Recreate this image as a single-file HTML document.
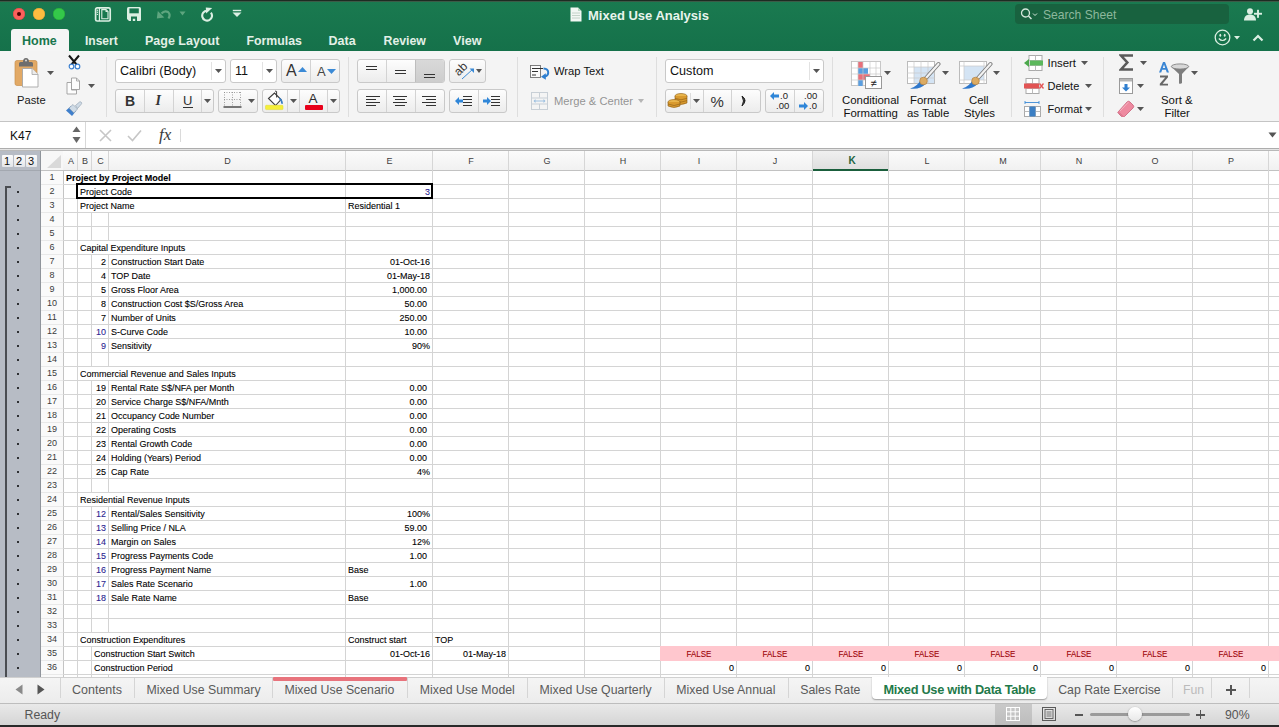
<!DOCTYPE html><html><head><meta charset="utf-8"><style>
html,body{margin:0;padding:0}
body{width:1279px;height:727px;overflow:hidden;position:relative;background:#fff;font-family:"Liberation Sans",sans-serif}
div{position:absolute;box-sizing:border-box}
.t{white-space:nowrap;line-height:1}
.c{white-space:nowrap;line-height:14px;height:14px;font-size:9.5px;color:#000;-webkit-text-stroke:0.1px}
.btn{border:1px solid #c9c9c9;border-radius:3px;background:linear-gradient(#fdfdfd,#ececec)}
.sep{background:#dcdcdc;width:1px}
</style></head><body>

<div style="left:0px;top:0px;width:1279px;height:51px;background:linear-gradient(#1a7a50,#15714a)"></div>
<div style="left:0px;top:0px;width:1279px;height:1px;background:#1d2b22"></div>
<div style="left:0px;top:1px;width:1279px;height:1px;background:#3b5a47"></div>
<div style="left:13px;top:8px;width:12px;height:12px;border-radius:50%;background:#fc605c;box-shadow:inset 0 0 0 0.5px #de4a46"></div>
<div style="left:33px;top:8px;width:12px;height:12px;border-radius:50%;background:#fdbc40;box-shadow:inset 0 0 0 0.5px #de9f34"></div>
<div style="left:53px;top:8px;width:12px;height:12px;border-radius:50%;background:#34c84a;box-shadow:inset 0 0 0 0.5px #27aa35"></div>
<div style="left:17px;top:12px;width:4px;height:4px;border-radius:50%;background:#4d0000"></div>
<svg style="position:absolute;left:94px;top:6px;" width="18" height="16" viewBox="0 0 18 16"><rect x="1.6" y="1.8" width="14.6" height="13.2" rx="1.6" fill="none" stroke="#dcefe3" stroke-width="1.7"/><rect x="4.8" y="2" width="1.2" height="13" fill="#dcefe3"/><circle cx="3.4" cy="4.2" r="0.7" fill="#dcefe3"/><circle cx="3.4" cy="6.3" r="0.7" fill="#dcefe3"/><circle cx="3.4" cy="8.4" r="0.7" fill="#dcefe3"/><path d="M7.8 3.6h4.2l2 2v7.2H7.8z" fill="none" stroke="#dcefe3" stroke-width="1.1"/><path d="M11.5 3.6l2.5 2.5h-2.5z" fill="#dcefe3"/></svg>
<svg style="position:absolute;left:126px;top:6px;" width="16" height="16" viewBox="0 0 16 16"><path d="M2.5 1h11q1.5 0 1.5 1.5v11q0 1.5-1.5 1.5H3L1 13V2.5Q1 1 2.5 1z" fill="#dcefe3"/><rect x="3.4" y="2.4" width="9.4" height="4.9" fill="#1a7650"/><path d="M5 14.9v-4.3h6v4.3h-1.8v-2.2h-2.4v2.2z" fill="#1a7650"/></svg>
<svg style="position:absolute;left:156px;top:8px;" width="17" height="13" viewBox="0 0 17 13"><path d="M5.5 5.5q3-3.5 6.5-1.5q3 2.5 0.5 6.5" fill="none" stroke="#5ea57f" stroke-width="2.2"/><path d="M0.8 10.5l1-7.5 6.5 6.5z" fill="#5ea57f"/></svg>
<svg style="position:absolute;left:179px;top:11px;" width="7" height="5" viewBox="0 0 7 5"><path d="M0.5 0.5h6l-3 4z" fill="#5ea57f"/></svg>
<svg style="position:absolute;left:199px;top:7px;" width="15" height="15" viewBox="0 0 15 15"><path d="M8 3.8A4.9 4.9 0 1 0 11.9 5.6" fill="none" stroke="#dcefe3" stroke-width="2.1"/><path d="M6.8 0.6L13.2 0.9 7.2 6.6z" fill="#dcefe3"/></svg>
<svg style="position:absolute;left:232px;top:9px;" width="10" height="9" viewBox="0 0 10 9"><rect x="0.8" y="0.8" width="8.4" height="1.4" fill="#dcefe3"/><path d="M0.5 3.4h9l-4.5 4.6z" fill="#dcefe3"/></svg>
<svg style="position:absolute;left:570px;top:7px;" width="12" height="15" viewBox="0 0 12 15"><path d="M0.5 0.5h7.5l3.5 3.5v10.5h-11z" fill="#f2f7f3"/><path d="M8 0.5v3.5h3.5" fill="#b9d7c3"/><g stroke="#b8c9bd" stroke-width="0.8"><line x1="2" y1="6" x2="10" y2="6"/><line x1="2" y1="8.5" x2="10" y2="8.5"/><line x1="2" y1="11" x2="10" y2="11"/></g></svg>
<div class="t" style="left:588px;top:9px;font-size:13px;color:#e8f4ec;font-weight:bold">Mixed Use Analysis</div>
<div style="left:1015px;top:4px;width:214px;height:20px;background:#18623f;border-radius:4px"></div>
<svg style="position:absolute;left:1020px;top:8px;" width="18" height="12" viewBox="0 0 18 12"><circle cx="5.5" cy="5" r="4" fill="none" stroke="#d5e8dc" stroke-width="1.3"/><line x1="8.5" y1="8" x2="11.5" y2="11" stroke="#d5e8dc" stroke-width="1.5"/><path d="M13 5.5l2 2 2-2" fill="none" stroke="#d5e8dc" stroke-width="1"/></svg>
<div class="t" style="left:1043px;top:9px;font-size:12.1px;color:#8cb89d">Search Sheet</div>
<svg style="position:absolute;left:1244px;top:8px;" width="19" height="13" viewBox="0 0 19 13"><circle cx="6" cy="3.2" r="3" fill="#dcefe3"/><path d="M0 12.5c0-4 2.5-6 6-6s6 2 6 6z" fill="#dcefe3"/><rect x="10" y="4.8" width="8" height="1.9" fill="#dcefe3"/><rect x="13.05" y="1.8" width="1.9" height="8" fill="#dcefe3"/></svg>
<div style="left:11px;top:29px;width:58px;height:23px;background:#f5f5f5;border-radius:3px 3px 0 0"></div>
<div class="t" style="left:22px;top:35px;font-size:12.5px;font-weight:bold;color:#18764d">Home</div>
<div class="t" style="left:85px;top:35px;font-size:12px;font-weight:bold;color:#e3f0e7">Insert</div>
<div class="t" style="left:145px;top:35px;font-size:12.5px;font-weight:bold;color:#e3f0e7">Page Layout</div>
<div class="t" style="left:246.5px;top:35px;font-size:12.3px;font-weight:bold;color:#e3f0e7">Formulas</div>
<div class="t" style="left:328.5px;top:35px;font-size:12.5px;font-weight:bold;color:#e3f0e7">Data</div>
<div class="t" style="left:383.5px;top:35px;font-size:12.3px;font-weight:bold;color:#e3f0e7">Review</div>
<div class="t" style="left:453px;top:35px;font-size:12.6px;font-weight:bold;color:#e3f0e7">View</div>
<svg style="position:absolute;left:1214px;top:29px;" width="26" height="17" viewBox="0 0 26 17"><circle cx="8.5" cy="8.5" r="7.3" fill="none" stroke="#dcefe3" stroke-width="1.3"/><ellipse cx="6.3" cy="6.3" rx="0.9" ry="1.5" fill="#dcefe3"/><ellipse cx="10.7" cy="6.3" rx="0.9" ry="1.5" fill="#dcefe3"/><path d="M4.8 9.5q3.7 4 7.4 0" fill="none" stroke="#dcefe3" stroke-width="1.2"/><path d="M20 7h6l-3 3.5z" fill="#dcefe3"/></svg>
<svg style="position:absolute;left:1252px;top:33px;" width="12" height="9" viewBox="0 0 12 9"><path d="M1.5 7.5l4.5-4.5 4.5 4.5" fill="none" stroke="#dcefe3" stroke-width="2.2"/></svg>
<div style="left:0px;top:51px;width:1279px;height:70px;background:#f4f4f4"></div>
<div style="left:0px;top:121px;width:1279px;height:1px;background:#c4c4c4"></div>
<div style="left:106px;top:57px;width:1px;height:60px;background:#dedede"></div>
<div style="left:348px;top:57px;width:1px;height:60px;background:#dedede"></div>
<div style="left:517px;top:57px;width:1px;height:60px;background:#dedede"></div>
<div style="left:656px;top:57px;width:1px;height:60px;background:#dedede"></div>
<div style="left:832px;top:57px;width:1px;height:60px;background:#dedede"></div>
<div style="left:1011px;top:57px;width:1px;height:60px;background:#dedede"></div>
<div style="left:1103px;top:57px;width:1px;height:60px;background:#dedede"></div>
<svg style="position:absolute;left:14px;top:57px;" width="26" height="32" viewBox="0 0 26 32"><rect x="1" y="3.5" width="22" height="25" rx="2" fill="#e2a965" stroke="#c98f4c" stroke-width="0.7"/><path d="M5 9.5v-3q0-1.5 1.5-1.5h2.5q0-4 3-4t3 4h2.5q1.5 0 1.5 1.5v3z" fill="#6e6e6e"/><circle cx="12" cy="3.6" r="1" fill="#ddd"/><path d="M8.5 11.5h9.5l6 6v12.5h-15.5z" fill="#fff" stroke="#a6a6a6" stroke-width="0.9"/><path d="M18 11.5v6h6" fill="#ececec" stroke="#a6a6a6" stroke-width="0.8"/></svg>
<svg style="position:absolute;left:47.0px;top:71.0px;" width="7" height="4" viewBox="0 0 7 4"><path d="M0 0h7l-3.5 4z" fill="#555"/></svg>
<div class="t" style="left:17px;top:95px;font-size:11.2px;color:#1a1a1a">Paste</div>
<svg style="position:absolute;left:66px;top:54px;" width="16" height="16" viewBox="0 0 16 16"><path d="M3 1.5l7.5 9M13 1.5L5.5 10.5" stroke="#151515" stroke-width="2"/><circle cx="5.5" cy="12.5" r="2.3" fill="#fff" stroke="#3a7fd0" stroke-width="1.2"/><circle cx="11.5" cy="12.5" r="2.3" fill="#fff" stroke="#3a7fd0" stroke-width="1.2"/></svg>
<svg style="position:absolute;left:66px;top:77px;" width="16" height="18" viewBox="0 0 16 18"><path d="M5.5 1h5l3 3v8.5h-8z" fill="#fdfdfd" stroke="#9d9d9d" stroke-width="0.9"/><path d="M10.5 1v3h3" fill="none" stroke="#9d9d9d" stroke-width="0.8"/><path d="M1 5.5h4.5v7.5h5v4h-9.5z" fill="#fdfdfd" stroke="#9d9d9d" stroke-width="0.9"/></svg>
<svg style="position:absolute;left:88.0px;top:83.5px;" width="7" height="4" viewBox="0 0 7 4"><path d="M0 0h7l-3.5 4z" fill="#555"/></svg>
<svg style="position:absolute;left:65px;top:101px;" width="18" height="16" viewBox="0 0 18 16"><path d="M1 9.5l5-4.5 5 5-4 5z" fill="#3f7fcb"/><path d="M4 7l4-3.5 4.5 4.5-3.5 4z" fill="#cfdbe6" stroke="#8a9aab" stroke-width="0.6"/><path d="M10.5 4.5l4-3.5q1.5-.5 2 .5.5 1-.5 2l-3.5 4z" fill="#cfdbe6" stroke="#8a9aab" stroke-width="0.6"/></svg>
<div style="left:115px;top:59px;width:111px;height:24px;border:1px solid #c9c9c9;border-radius:3px;background:#fff"></div>
<div style="left:211px;top:62px;width:1px;height:18px;background:#e2e2e2"></div>
<div class="t" style="left:120px;top:65px;font-size:12.6px;color:#111">Calibri (Body)</div>
<svg style="position:absolute;left:215.0px;top:69.0px;" width="7" height="4" viewBox="0 0 7 4"><path d="M0 0h7l-3.5 4z" fill="#555"/></svg>
<div style="left:230px;top:59px;width:47px;height:24px;border:1px solid #c9c9c9;border-radius:3px;background:#fff"></div>
<div style="left:262px;top:62px;width:1px;height:18px;background:#e2e2e2"></div>
<div class="t" style="left:235px;top:65px;font-size:12.6px;color:#111">11</div>
<svg style="position:absolute;left:266.0px;top:69.0px;" width="7" height="4" viewBox="0 0 7 4"><path d="M0 0h7l-3.5 4z" fill="#555"/></svg>
<div style="left:281px;top:59px;width:59px;height:24px;"></div>
<div class="btn" style="left:281px;top:59px;width:59px;height:24px"></div>
<div style="left:310px;top:60px;width:1px;height:22px;background:#d3d3d3"></div>
<div class="t" style="left:286px;top:63px;font-size:16px;color:#333">A</div>
<svg style="position:absolute;left:298px;top:67px;" width="9" height="5" viewBox="0 0 9 5"><path d="M0 5l4.5-5 4.5 5z" fill="#3b8ad6"/></svg>
<div class="t" style="left:317px;top:65px;font-size:13px;color:#444">A</div>
<svg style="position:absolute;left:327px;top:69px;" width="9" height="5" viewBox="0 0 9 5"><path d="M0 0h9l-4.5 5z" fill="#3b8ad6"/></svg>
<div class="btn" style="left:115px;top:89px;width:99px;height:24px"></div>
<div style="left:144px;top:90px;width:1px;height:22px;background:#d3d3d3"></div>
<div style="left:173px;top:90px;width:1px;height:22px;background:#d3d3d3"></div>
<div style="left:201px;top:90px;width:1px;height:22px;background:#d3d3d3"></div>
<div class="t" style="left:125px;top:94px;font-size:14px;font-weight:bold;color:#333">B</div>
<div class="t" style="left:155.5px;top:94px;font-size:14px;font-style:italic;font-family:'Liberation Serif';font-weight:bold;color:#333">I</div>
<div class="t" style="left:183px;top:94px;font-size:13px;color:#333">U</div>
<div style="left:183px;top:106.5px;width:10px;height:1.3px;background:#333"></div>
<svg style="position:absolute;left:203.5px;top:99.0px;" width="7" height="4" viewBox="0 0 7 4"><path d="M0 0h7l-3.5 4z" fill="#555"/></svg>
<div class="btn" style="left:218px;top:89px;width:40px;height:24px"></div>
<svg style="position:absolute;left:223px;top:91px;" width="19" height="17" viewBox="0 0 19 17"><g stroke="#8a8a8a" stroke-width="0.9" stroke-dasharray="0.9 1.6"><path d="M1 1.5h17M1 8.5h17M1.5 1v15M9.5 1v15M17.5 1v15"/></g><path d="M0.5 16h18" stroke="#333" stroke-width="1.3"/></svg>
<svg style="position:absolute;left:248.0px;top:99.0px;" width="7" height="4" viewBox="0 0 7 4"><path d="M0 0h7l-3.5 4z" fill="#555"/></svg>
<div class="btn" style="left:262px;top:89px;width:78px;height:24px"></div>
<div style="left:287px;top:90px;width:1px;height:22px;background:#d3d3d3"></div>
<div style="left:299px;top:90px;width:1px;height:22px;background:#d3d3d3"></div>
<div style="left:327px;top:90px;width:1px;height:22px;background:#d3d3d3"></div>
<svg style="position:absolute;left:264px;top:90px;" width="22" height="21" viewBox="0 0 22 21"><path d="M4.5 8.5l6-5.5 6.5 6.5-5.5 6z" fill="#fff" stroke="#3c3c3c" stroke-width="1.1"/><path d="M11 1.5q1-1 1.6 0v6" fill="none" stroke="#3c3c3c" stroke-width="1"/><path d="M15.5 7.5q3 1.5 3.5 6 -1 .8-1.8 0q0-3-2.2-4.5z" fill="#3a7fc4"/><rect x="1.5" y="15.3" width="17.5" height="4.3" rx="0.8" fill="#f5ef3a" stroke="#e0d82a" stroke-width="0.5"/></svg>
<svg style="position:absolute;left:290.0px;top:99.0px;" width="7" height="4" viewBox="0 0 7 4"><path d="M0 0h7l-3.5 4z" fill="#555"/></svg>
<div class="t" style="left:308.5px;top:91.5px;font-size:13.5px;color:#2d2d2d">A</div>
<div style="left:305px;top:105px;width:18px;height:4.5px;background:#e8001a;border-radius:1px"></div>
<svg style="position:absolute;left:329.5px;top:99.0px;" width="7" height="4" viewBox="0 0 7 4"><path d="M0 0h7l-3.5 4z" fill="#555"/></svg>
<div class="btn" style="left:357px;top:59px;width:88px;height:24px"></div>
<div style="left:415px;top:60px;width:29px;height:22px;background:linear-gradient(#d9d9d9,#cdcdcd);border-radius:0 2px 2px 0"></div>
<div style="left:386px;top:60px;width:1px;height:22px;background:#d3d3d3"></div>
<div style="left:415px;top:60px;width:1px;height:22px;background:#bdbdbd"></div>
<div style="left:366px;top:66px;width:11px;height:1.3px;background:#333"></div>
<div style="left:366px;top:69px;width:11px;height:1.3px;background:#333"></div>
<div style="left:395px;top:70px;width:11px;height:1.3px;background:#333"></div>
<div style="left:395px;top:73px;width:11px;height:1.3px;background:#333"></div>
<div style="left:424px;top:74px;width:11px;height:1.3px;background:#333"></div>
<div style="left:424px;top:77px;width:11px;height:1.3px;background:#333"></div>
<div class="btn" style="left:449px;top:59px;width:37px;height:24px"></div>
<div class="t" style="left:454px;top:63px;font-size:12px;color:#333;transform:rotate(-45deg);transform-origin:50% 50%">ab</div>
<svg style="position:absolute;left:461px;top:67px;" width="14" height="13" viewBox="0 0 14 13"><path d="M1 12L12 2" stroke="#3b8ad6" stroke-width="1"/><path d="M8.5 1.5h4.5v4.5z" fill="#3b8ad6"/></svg>
<svg style="position:absolute;left:476.0px;top:69.0px;" width="6" height="4" viewBox="0 0 6 4"><path d="M0 0h6l-3.0 4z" fill="#555"/></svg>
<div class="btn" style="left:357px;top:89px;width:88px;height:24px"></div>
<div style="left:386px;top:90px;width:1px;height:22px;background:#d3d3d3"></div>
<div style="left:415px;top:90px;width:1px;height:22px;background:#d3d3d3"></div>
<div style="left:366px;top:96px;width:14px;height:1.2px;background:#333"></div>
<div style="left:366px;top:99px;width:10px;height:1.2px;background:#333"></div>
<div style="left:366px;top:102px;width:14px;height:1.2px;background:#333"></div>
<div style="left:366px;top:105px;width:10px;height:1.2px;background:#333"></div>
<div style="left:393.0px;top:96px;width:14px;height:1.2px;background:#333"></div>
<div style="left:395.0px;top:99px;width:10px;height:1.2px;background:#333"></div>
<div style="left:393.0px;top:102px;width:14px;height:1.2px;background:#333"></div>
<div style="left:395.0px;top:105px;width:10px;height:1.2px;background:#333"></div>
<div style="left:422px;top:96px;width:14px;height:1.2px;background:#333"></div>
<div style="left:426px;top:99px;width:10px;height:1.2px;background:#333"></div>
<div style="left:422px;top:102px;width:14px;height:1.2px;background:#333"></div>
<div style="left:426px;top:105px;width:10px;height:1.2px;background:#333"></div>
<div class="btn" style="left:449px;top:89px;width:58px;height:24px"></div>
<div style="left:478px;top:90px;width:1px;height:22px;background:#d3d3d3"></div>
<div style="left:463px;top:96px;width:9px;height:1.2px;background:#333"></div>
<div style="left:463px;top:99px;width:9px;height:1.2px;background:#333"></div>
<div style="left:463px;top:102px;width:9px;height:1.2px;background:#333"></div>
<div style="left:463px;top:105px;width:9px;height:1.2px;background:#333"></div>
<svg style="position:absolute;left:455px;top:96px;" width="8" height="10" viewBox="0 0 8 10"><path d="M0 5l4-4v2.5h4v3H4V9z" fill="#2f86d8"/></svg>
<div style="left:491px;top:96px;width:9px;height:1.2px;background:#333"></div>
<div style="left:491px;top:99px;width:9px;height:1.2px;background:#333"></div>
<div style="left:491px;top:102px;width:9px;height:1.2px;background:#333"></div>
<div style="left:491px;top:105px;width:9px;height:1.2px;background:#333"></div>
<svg style="position:absolute;left:483px;top:96px;" width="8" height="10" viewBox="0 0 8 10"><path d="M8 5L4 1v2.5H0v3h4V9z" fill="#2f86d8"/></svg>
<svg style="position:absolute;left:529px;top:64px;" width="23" height="16" viewBox="0 0 23 16"><rect x="1.5" y="1.5" width="10" height="12" fill="#fbfbfb" stroke="#707070" stroke-width="0.9"/><path d="M3 4.5H14M3 7.5H9M3 11H7" stroke="#333" stroke-width="1.1"/><path d="M14.5 4.5Q19.5 4.8 19.2 9Q19 12 15.5 12.6" fill="none" stroke="#2f7fcf" stroke-width="2"/><path d="M16.8 9.2L12 12.8 16.8 15.8z" fill="#2f7fcf"/></svg>
<div class="t" style="left:554px;top:66px;font-size:11.2px;color:#111">Wrap Text</div>
<svg style="position:absolute;left:531px;top:92px;" width="17" height="18" viewBox="0 0 17 18"><rect x="0.5" y="0.5" width="16" height="17" fill="none" stroke="#c8cfd6"/><path d="M0.5 6h16M0.5 12h16M8.5 0.5v5M8.5 12v5" stroke="#c8cfd6"/><path d="M3 9h11" stroke="#9ec0e0" stroke-width="1"/><path d="M2.5 9l2-2v4zM14.5 9l-2-2v4z" fill="#9ec0e0"/></svg>
<div class="t" style="left:554px;top:96px;font-size:11.2px;color:#959595">Merge &amp; Center</div>
<svg style="position:absolute;left:638.0px;top:99.0px;" width="6" height="4" viewBox="0 0 6 4"><path d="M0 0h6l-3.0 4z" fill="#b5b5b5"/></svg>
<div style="left:665px;top:59px;width:159px;height:24px;border:1px solid #c9c9c9;border-radius:3px;background:#fff"></div>
<div style="left:809px;top:62px;width:1px;height:18px;background:#e2e2e2"></div>
<div class="t" style="left:670px;top:65px;font-size:12.6px;color:#111">Custom</div>
<svg style="position:absolute;left:813.0px;top:69.0px;" width="7" height="4" viewBox="0 0 7 4"><path d="M0 0h7l-3.5 4z" fill="#555"/></svg>
<div class="btn" style="left:665px;top:89px;width:96px;height:24px"></div>
<div style="left:690px;top:93px;width:1px;height:16px;background:#dcdcdc"></div>
<div style="left:703px;top:90px;width:1px;height:22px;background:#d3d3d3"></div>
<div style="left:731px;top:90px;width:1px;height:22px;background:#d3d3d3"></div>
<svg style="position:absolute;left:666px;top:92px;" width="24" height="17" viewBox="0 0 24 17"><g stroke="#8a5a14" stroke-width="0.6"><ellipse cx="15" cy="4" rx="6" ry="2.5" fill="#e9b54c"/><path d="M9 4v7q6 3 12 0V4" fill="#d99a2e"/><path d="M9 6.3q6 3 12 0M9 8.6q6 3 12 0" fill="none"/><ellipse cx="8" cy="10" rx="6" ry="2.5" fill="#e9b54c"/><path d="M2 10v4q6 3 12 0v-4" fill="#d99a2e"/><path d="M2 12q6 3 12 0" fill="none"/></g></svg>
<svg style="position:absolute;left:693.0px;top:99.0px;" width="7" height="4" viewBox="0 0 7 4"><path d="M0 0h7l-3.5 4z" fill="#555"/></svg>
<div class="t" style="left:710.5px;top:93.5px;font-size:15px;color:#333">%</div>
<svg style="position:absolute;left:740px;top:95px;" width="8" height="12" viewBox="0 0 8 12"><path d="M2 1q6 4 0 10q3-5 0-10z" fill="#222" stroke="#222" stroke-width="1"/></svg>
<div class="btn" style="left:765px;top:89px;width:59px;height:24px"></div>
<div style="left:794px;top:90px;width:1px;height:22px;background:#d3d3d3"></div>
<svg style="position:absolute;left:770px;top:92px;" width="9" height="8" viewBox="0 0 9 8"><path d="M0 4l4-4v2.5h5v3H4V8z" fill="#2f86d8"/></svg>
<div class="t" style="left:780px;top:91px;font-size:9.5px;color:#222">.0</div>
<div class="t" style="left:776px;top:101px;font-size:9.5px;color:#222">.00</div>
<div class="t" style="left:804px;top:91px;font-size:9.5px;color:#222">.00</div>
<svg style="position:absolute;left:799px;top:102px;" width="9" height="8" viewBox="0 0 9 8"><path d="M9 4L5 0v2.5H0v3h5V8z" fill="#2f86d8"/></svg>
<div class="t" style="left:809px;top:101px;font-size:9.5px;color:#222">.0</div>
<svg style="position:absolute;left:851px;top:61px;" width="32" height="28" viewBox="0 0 32 28"><g fill="#fff" stroke="#bbb" stroke-width="0.8"><rect x="0.5" y="0.5" width="29" height="24"/></g><rect x="7" y="1" width="5" height="6" fill="#e8707a"/><rect x="7" y="7" width="10" height="6" fill="#5a9ee0"/><rect x="7" y="13" width="12" height="6" fill="#e8707a"/><rect x="7" y="19" width="5" height="6" fill="#5a9ee0"/><g stroke="#c8c8c8" stroke-width="0.7"><path d="M7 0v25M12 0v25M19 0v25M25 0v25M0 7h30M0 13h30M0 19h30"/></g><rect x="14.5" y="15.5" width="16" height="12" fill="#fff" stroke="#999"/><text x="22.5" y="26" font-size="11" text-anchor="middle" fill="#222" font-family="Liberation Sans">&#8800;</text></svg>
<svg style="position:absolute;left:884.0px;top:71.0px;" width="7" height="4" viewBox="0 0 7 4"><path d="M0 0h7l-3.5 4z" fill="#555"/></svg>
<div class="t" style="left:842px;top:95px;font-size:11.4px;color:#111">Conditional</div>
<div class="t" style="left:843.5px;top:107.5px;font-size:11.4px;color:#111">Formatting</div>
<svg style="position:absolute;left:907px;top:61px;" width="34" height="28" viewBox="0 0 34 28"><rect x="0.5" y="0.5" width="27" height="22" fill="#fff" stroke="#bbb"/><rect x="7" y="6" width="20" height="16" fill="#d4e4f4"/><g stroke="#c8c8c8" stroke-width="0.7"><path d="M7 0v23M14 0v23M21 0v23M0 6h28M0 12h28M0 17h28"/></g><path d="M31.5 3L19 17" stroke="#7d7d7d" stroke-width="4" stroke-linecap="round"/><path d="M31.5 3L19 17" stroke="#f2f2f2" stroke-width="2.2" stroke-linecap="round"/><path d="M13.5 19q-3 6.5-10.5 8.5q10 1.5 16-5z" fill="#2f78cc"/><circle cx="16.5" cy="20" r="3.8" fill="#dcab62" stroke="#b58140" stroke-width="0.7"/></svg>
<svg style="position:absolute;left:941.5px;top:71.0px;" width="7" height="4" viewBox="0 0 7 4"><path d="M0 0h7l-3.5 4z" fill="#555"/></svg>
<div class="t" style="left:910px;top:95px;font-size:11.4px;color:#111">Format</div>
<div class="t" style="left:907px;top:107.5px;font-size:11.4px;color:#111">as Table</div>
<svg style="position:absolute;left:959px;top:61px;" width="34" height="28" viewBox="0 0 34 28"><rect x="0.5" y="0.5" width="27" height="22" fill="#fff" stroke="#bbb"/><rect x="5" y="5" width="20" height="14" fill="#d4e4f4"/><g stroke="#c8c8c8" stroke-width="0.7"><path d="M5 0v23M25 0v23M0 5h28M0 19h28"/></g><path d="M31.5 3L19 17" stroke="#7d7d7d" stroke-width="4" stroke-linecap="round"/><path d="M31.5 3L19 17" stroke="#f2f2f2" stroke-width="2.2" stroke-linecap="round"/><path d="M13.5 19q-3 6.5-10.5 8.5q10 1.5 16-5z" fill="#2f78cc"/><circle cx="16.5" cy="20" r="3.8" fill="#dcab62" stroke="#b58140" stroke-width="0.7"/></svg>
<svg style="position:absolute;left:992.5px;top:71.0px;" width="7" height="4" viewBox="0 0 7 4"><path d="M0 0h7l-3.5 4z" fill="#555"/></svg>
<div class="t" style="left:969px;top:95px;font-size:11.4px;color:#111">Cell</div>
<div class="t" style="left:964px;top:107.5px;font-size:11.4px;color:#111">Styles</div>
<svg style="position:absolute;left:1024px;top:55px;" width="20" height="16" viewBox="0 0 20 16"><rect x="5" y="0.5" width="13" height="15" fill="#fff" stroke="#aaa"/><path d="M5 5.5h13M5 10.5h13M11.5 0.5v15" stroke="#bbb"/><rect x="6" y="5.5" width="13" height="5" fill="#5cb85c"/><path d="M0 8l5-4v8z" fill="#4ca84c"/></svg>
<div class="t" style="left:1047.5px;top:57.5px;font-size:11.4px;color:#111">Insert</div>
<svg style="position:absolute;left:1080.5px;top:61.0px;" width="7" height="4" viewBox="0 0 7 4"><path d="M0 0h7l-3.5 4z" fill="#555"/></svg>
<svg style="position:absolute;left:1024px;top:78px;" width="20" height="16" viewBox="0 0 20 16"><rect x="2" y="0.5" width="13" height="15" fill="#fff" stroke="#aaa"/><path d="M2 5.5h13M2 10.5h13M8.5 0.5v15" stroke="#bbb"/><rect x="0" y="5.5" width="15" height="5" fill="#e25454"/><path d="M15.5 5.5l4 5M19.5 5.5l-4 5" stroke="#e25454" stroke-width="1.3"/></svg>
<div class="t" style="left:1047.5px;top:80.5px;font-size:11px;color:#111">Delete</div>
<svg style="position:absolute;left:1084.5px;top:84.0px;" width="7" height="4" viewBox="0 0 7 4"><path d="M0 0h7l-3.5 4z" fill="#555"/></svg>
<svg style="position:absolute;left:1024px;top:100px;" width="18" height="17" viewBox="0 0 18 17"><path d="M1 2.5h14M1 1v3M15 1v3" stroke="#3b8ad6" stroke-width="0.9"/><rect x="0.5" y="6.5" width="16" height="10" fill="#fff" stroke="#aaa"/><path d="M0.5 11.5h16M5.5 6.5v10M11.5 6.5v10" stroke="#bbb"/><rect x="5.5" y="6.5" width="6" height="10" fill="#3b7fc4"/></svg>
<div class="t" style="left:1047.5px;top:103.5px;font-size:11px;color:#111">Format</div>
<svg style="position:absolute;left:1084.5px;top:107.0px;" width="7" height="4" viewBox="0 0 7 4"><path d="M0 0h7l-3.5 4z" fill="#555"/></svg>
<svg style="position:absolute;left:1119px;top:54px;" width="15" height="17" viewBox="0 0 15 17"><path d="M14 1.5H2L8.3 8.5 2 15.5H14" fill="none" stroke="#5b5b5b" stroke-width="2.6" stroke-linejoin="miter" stroke-miterlimit="3"/></svg>
<svg style="position:absolute;left:1140.1px;top:60.5px;" width="7" height="4" viewBox="0 0 7 4"><path d="M0 0h7l-3.5 4z" fill="#555"/></svg>
<svg style="position:absolute;left:1119px;top:78px;" width="14" height="16" viewBox="0 0 14 16"><rect x="0.5" y="0.5" width="13" height="15" fill="#fff" stroke="#9a9a9a"/><rect x="1" y="1" width="12" height="2.5" fill="#b5b5b5"/><path d="M5.5 6h3v3.5h2.5l-4 4-4-4h2.5z" fill="#2f7fd0"/></svg>
<svg style="position:absolute;left:1136.5px;top:84.0px;" width="7" height="4" viewBox="0 0 7 4"><path d="M0 0h7l-3.5 4z" fill="#555"/></svg>
<svg style="position:absolute;left:1117px;top:100px;" width="18" height="17" viewBox="0 0 18 17"><path d="M1.5 11.5l8.5-9.5q1.5-1.5 3 0l3 3q1.5 1.5 0 3l-8.5 8.5q-1.5 1.5-3 0l-3-3q-1.5-1.5 0-2z" fill="#ee8aa0" stroke="#c9607a" stroke-width="0.8"/><path d="M2 12.5l3.5 3.5" stroke="#c9607a" stroke-width="0.8"/><path d="M3 11l8.5-9" stroke="#f8c0cc" stroke-width="0.8"/></svg>
<svg style="position:absolute;left:1136.5px;top:107.0px;" width="7" height="4" viewBox="0 0 7 4"><path d="M0 0h7l-3.5 4z" fill="#555"/></svg>
<svg style="position:absolute;left:1158px;top:61px;" width="32" height="26" viewBox="0 0 32 26"><path d="M1 11.5L5 1h2l4 10.5H8.8l-1-2.7H4.2l-1 2.7zM4.8 6.9h2.4L6 3.6z" fill="#3a86d4"/><path d="M2 14.5h8v1.8L4.6 22.7H10v1.9H1.8v-1.8l5.4-6.4H2z" fill="#666"/><path d="M13 5.5q9-4 18 0l-7 7.5v9q-1 1.2-3 0.5v-9.5z" fill="#7d7d7d"/><ellipse cx="22" cy="5.5" rx="8.7" ry="2.6" fill="#d8d8d8" stroke="#858585" stroke-width="0.9"/></svg>
<svg style="position:absolute;left:1191.0px;top:71.0px;" width="7" height="4" viewBox="0 0 7 4"><path d="M0 0h7l-3.5 4z" fill="#555"/></svg>
<div class="t" style="left:1161px;top:95px;font-size:11.4px;color:#111">Sort &amp;</div>
<div class="t" style="left:1164.5px;top:107.5px;font-size:11.4px;color:#111">Filter</div>
<div style="left:0px;top:122px;width:1279px;height:26px;background:#fff"></div>
<div style="left:85px;top:122px;width:1px;height:26px;background:#d8d8d8"></div>
<div class="t" style="left:10px;top:130px;font-size:12px;color:#111">K47</div>
<svg style="position:absolute;left:72px;top:126px;" width="9" height="18" viewBox="0 0 9 18"><path d="M0.5 6l4-5.5 4 5.5z" fill="#666"/><path d="M0.5 11h8l-4 6z" fill="#666"/></svg>
<svg style="position:absolute;left:99px;top:129px;" width="13" height="13" viewBox="0 0 13 13"><path d="M1 1l11 11M12 1L1 12" stroke="#c6c6c6" stroke-width="1.6"/></svg>
<svg style="position:absolute;left:127px;top:129px;" width="15" height="13" viewBox="0 0 15 13"><path d="M1 7l4.5 4.5L14 1.5" fill="none" stroke="#c6c6c6" stroke-width="1.6"/></svg>
<div class="t" style="left:159px;top:126px;font-size:17px;font-style:italic;font-family:'Liberation Serif';color:#3a3a3a">fx</div>
<div style="left:180px;top:129px;width:1px;height:13px;background:#dadada"></div>
<svg style="position:absolute;left:1268px;top:132px;" width="9" height="6" viewBox="0 0 9 6"><path d="M0.5 0.5h8l-4 5z" fill="#555"/></svg>
<div style="left:0px;top:148px;width:1279px;height:1px;background:#adadad"></div>
<div style="left:0px;top:149px;width:1279px;height:1px;background:#e4e4e4"></div>
<div style="left:0px;top:150px;width:1279px;height:1px;background:#b9b9b9"></div>
<div style="left:0px;top:151px;width:41px;height:526px;background:#b7bcc5"></div>
<div style="left:40px;top:151px;width:1px;height:526px;background:#8f949b"></div>
<div style="left:0px;top:170px;width:40px;height:1px;background:#a3a8b0"></div>
<div style="left:2px;top:155px;width:11px;height:12px;background:linear-gradient(#fafafa,#e4e6ea);border-radius:1px"></div>
<div class="t" style="left:4px;top:156px;font-size:11px;color:#111">1</div>
<div style="left:14px;top:155px;width:11px;height:12px;background:linear-gradient(#fafafa,#e4e6ea);border-radius:1px"></div>
<div class="t" style="left:16px;top:156px;font-size:11px;color:#111">2</div>
<div style="left:26px;top:155px;width:11px;height:12px;background:linear-gradient(#fafafa,#e4e6ea);border-radius:1px"></div>
<div class="t" style="left:28px;top:156px;font-size:11px;color:#111">3</div>
<div style="left:5px;top:186px;width:2px;height:491px;background:#4a4d52"></div>
<div style="left:5px;top:186px;width:6px;height:2px;background:#4a4d52"></div>
<div style="left:17px;top:191px;width:2px;height:2px;background:#2e3033"></div>
<div style="left:17px;top:205px;width:2px;height:2px;background:#2e3033"></div>
<div style="left:17px;top:219px;width:2px;height:2px;background:#2e3033"></div>
<div style="left:17px;top:233px;width:2px;height:2px;background:#2e3033"></div>
<div style="left:17px;top:247px;width:2px;height:2px;background:#2e3033"></div>
<div style="left:17px;top:261px;width:2px;height:2px;background:#2e3033"></div>
<div style="left:17px;top:275px;width:2px;height:2px;background:#2e3033"></div>
<div style="left:17px;top:289px;width:2px;height:2px;background:#2e3033"></div>
<div style="left:17px;top:303px;width:2px;height:2px;background:#2e3033"></div>
<div style="left:17px;top:317px;width:2px;height:2px;background:#2e3033"></div>
<div style="left:17px;top:331px;width:2px;height:2px;background:#2e3033"></div>
<div style="left:17px;top:345px;width:2px;height:2px;background:#2e3033"></div>
<div style="left:17px;top:359px;width:2px;height:2px;background:#2e3033"></div>
<div style="left:17px;top:373px;width:2px;height:2px;background:#2e3033"></div>
<div style="left:17px;top:387px;width:2px;height:2px;background:#2e3033"></div>
<div style="left:17px;top:401px;width:2px;height:2px;background:#2e3033"></div>
<div style="left:17px;top:415px;width:2px;height:2px;background:#2e3033"></div>
<div style="left:17px;top:429px;width:2px;height:2px;background:#2e3033"></div>
<div style="left:17px;top:443px;width:2px;height:2px;background:#2e3033"></div>
<div style="left:17px;top:457px;width:2px;height:2px;background:#2e3033"></div>
<div style="left:17px;top:471px;width:2px;height:2px;background:#2e3033"></div>
<div style="left:17px;top:485px;width:2px;height:2px;background:#2e3033"></div>
<div style="left:17px;top:499px;width:2px;height:2px;background:#2e3033"></div>
<div style="left:17px;top:513px;width:2px;height:2px;background:#2e3033"></div>
<div style="left:17px;top:527px;width:2px;height:2px;background:#2e3033"></div>
<div style="left:17px;top:541px;width:2px;height:2px;background:#2e3033"></div>
<div style="left:17px;top:555px;width:2px;height:2px;background:#2e3033"></div>
<div style="left:17px;top:569px;width:2px;height:2px;background:#2e3033"></div>
<div style="left:17px;top:583px;width:2px;height:2px;background:#2e3033"></div>
<div style="left:17px;top:597px;width:2px;height:2px;background:#2e3033"></div>
<div style="left:17px;top:611px;width:2px;height:2px;background:#2e3033"></div>
<div style="left:17px;top:625px;width:2px;height:2px;background:#2e3033"></div>
<div style="left:17px;top:639px;width:2px;height:2px;background:#2e3033"></div>
<div style="left:17px;top:653px;width:2px;height:2px;background:#2e3033"></div>
<div style="left:17px;top:667px;width:2px;height:2px;background:#2e3033"></div>
<div style="left:41px;top:151px;width:22px;height:526px;background:#fafafa"></div>
<div style="left:63px;top:151px;width:1px;height:526px;background:#c4c4c4"></div>
<div style="left:63px;top:151px;width:1216px;height:19px;background:linear-gradient(#fbfbfb,#f1f1f1)"></div>
<div style="left:41px;top:151px;width:22px;height:19px;background:#f7f7f7"></div>
<svg style="position:absolute;left:47px;top:155px;" width="14" height="13" viewBox="0 0 14 13"><path d="M14 0V13H0z" fill="#d9d9d9"/></svg>
<div style="left:41px;top:170px;width:1238px;height:1px;background:#c2c2c2"></div>
<div style="left:812px;top:151px;width:76px;height:19px;background:linear-gradient(#f0f0f0,#dedede)"></div>
<div style="left:812px;top:169px;width:77px;height:2px;background:#1a5e3c"></div>
<div style="left:77px;top:151px;width:1px;height:19px;background:#d6d6d6"></div>
<div class="t" style="left:64px;top:157px;width:14px;text-align:center;font-size:9px;color:#404040">A</div>
<div style="left:91px;top:151px;width:1px;height:19px;background:#d6d6d6"></div>
<div class="t" style="left:78px;top:157px;width:14px;text-align:center;font-size:9px;color:#404040">B</div>
<div style="left:108px;top:151px;width:1px;height:19px;background:#d6d6d6"></div>
<div class="t" style="left:92px;top:157px;width:17px;text-align:center;font-size:9px;color:#404040">C</div>
<div style="left:345px;top:151px;width:1px;height:19px;background:#d6d6d6"></div>
<div class="t" style="left:109px;top:157px;width:237px;text-align:center;font-size:9px;color:#404040">D</div>
<div style="left:432px;top:151px;width:1px;height:19px;background:#d6d6d6"></div>
<div class="t" style="left:346px;top:157px;width:87px;text-align:center;font-size:9px;color:#404040">E</div>
<div style="left:508px;top:151px;width:1px;height:19px;background:#d6d6d6"></div>
<div class="t" style="left:433px;top:157px;width:76px;text-align:center;font-size:9px;color:#404040">F</div>
<div style="left:584px;top:151px;width:1px;height:19px;background:#d6d6d6"></div>
<div class="t" style="left:509px;top:157px;width:76px;text-align:center;font-size:9px;color:#404040">G</div>
<div style="left:660px;top:151px;width:1px;height:19px;background:#d6d6d6"></div>
<div class="t" style="left:585px;top:157px;width:76px;text-align:center;font-size:9px;color:#404040">H</div>
<div style="left:736px;top:151px;width:1px;height:19px;background:#d6d6d6"></div>
<div class="t" style="left:661px;top:157px;width:76px;text-align:center;font-size:9px;color:#404040">I</div>
<div style="left:812px;top:151px;width:1px;height:19px;background:#d6d6d6"></div>
<div class="t" style="left:737px;top:157px;width:76px;text-align:center;font-size:9px;color:#404040">J</div>
<div style="left:888px;top:151px;width:1px;height:19px;background:#d6d6d6"></div>
<div class="t" style="left:814px;top:156px;width:76px;text-align:center;font-size:10px;color:#1d6440;font-weight:bold">K</div>
<div style="left:964px;top:151px;width:1px;height:19px;background:#d6d6d6"></div>
<div class="t" style="left:889px;top:157px;width:76px;text-align:center;font-size:9px;color:#404040">L</div>
<div style="left:1040px;top:151px;width:1px;height:19px;background:#d6d6d6"></div>
<div class="t" style="left:965px;top:157px;width:76px;text-align:center;font-size:9px;color:#404040">M</div>
<div style="left:1116px;top:151px;width:1px;height:19px;background:#d6d6d6"></div>
<div class="t" style="left:1041px;top:157px;width:76px;text-align:center;font-size:9px;color:#404040">N</div>
<div style="left:1192px;top:151px;width:1px;height:19px;background:#d6d6d6"></div>
<div class="t" style="left:1117px;top:157px;width:76px;text-align:center;font-size:9px;color:#404040">O</div>
<div style="left:1268px;top:151px;width:1px;height:19px;background:#d6d6d6"></div>
<div class="t" style="left:1193px;top:157px;width:76px;text-align:center;font-size:9px;color:#404040">P</div>
<div style="left:1344px;top:151px;width:1px;height:19px;background:#d6d6d6"></div>
<div class="t" style="left:1269px;top:157px;width:76px;text-align:center;font-size:9px;color:#404040">Q</div>
<div class="t" style="left:41px;top:173px;width:22px;text-align:center;font-size:9px;color:#3a3a3a">1</div>
<div style="left:41px;top:184px;width:22px;height:1px;background:#e9e9e9"></div>
<div class="t" style="left:41px;top:187px;width:22px;text-align:center;font-size:9px;color:#3a3a3a">2</div>
<div style="left:41px;top:198px;width:22px;height:1px;background:#e9e9e9"></div>
<div class="t" style="left:41px;top:201px;width:22px;text-align:center;font-size:9px;color:#3a3a3a">3</div>
<div style="left:41px;top:212px;width:22px;height:1px;background:#e9e9e9"></div>
<div class="t" style="left:41px;top:215px;width:22px;text-align:center;font-size:9px;color:#3a3a3a">4</div>
<div style="left:41px;top:226px;width:22px;height:1px;background:#e9e9e9"></div>
<div class="t" style="left:41px;top:229px;width:22px;text-align:center;font-size:9px;color:#3a3a3a">5</div>
<div style="left:41px;top:240px;width:22px;height:1px;background:#e9e9e9"></div>
<div class="t" style="left:41px;top:243px;width:22px;text-align:center;font-size:9px;color:#3a3a3a">6</div>
<div style="left:41px;top:254px;width:22px;height:1px;background:#e9e9e9"></div>
<div class="t" style="left:41px;top:257px;width:22px;text-align:center;font-size:9px;color:#3a3a3a">7</div>
<div style="left:41px;top:268px;width:22px;height:1px;background:#e9e9e9"></div>
<div class="t" style="left:41px;top:271px;width:22px;text-align:center;font-size:9px;color:#3a3a3a">8</div>
<div style="left:41px;top:282px;width:22px;height:1px;background:#e9e9e9"></div>
<div class="t" style="left:41px;top:285px;width:22px;text-align:center;font-size:9px;color:#3a3a3a">9</div>
<div style="left:41px;top:296px;width:22px;height:1px;background:#e9e9e9"></div>
<div class="t" style="left:41px;top:299px;width:22px;text-align:center;font-size:9px;color:#3a3a3a">10</div>
<div style="left:41px;top:310px;width:22px;height:1px;background:#e9e9e9"></div>
<div class="t" style="left:41px;top:313px;width:22px;text-align:center;font-size:9px;color:#3a3a3a">11</div>
<div style="left:41px;top:324px;width:22px;height:1px;background:#e9e9e9"></div>
<div class="t" style="left:41px;top:327px;width:22px;text-align:center;font-size:9px;color:#3a3a3a">12</div>
<div style="left:41px;top:338px;width:22px;height:1px;background:#e9e9e9"></div>
<div class="t" style="left:41px;top:341px;width:22px;text-align:center;font-size:9px;color:#3a3a3a">13</div>
<div style="left:41px;top:352px;width:22px;height:1px;background:#e9e9e9"></div>
<div class="t" style="left:41px;top:355px;width:22px;text-align:center;font-size:9px;color:#3a3a3a">14</div>
<div style="left:41px;top:366px;width:22px;height:1px;background:#e9e9e9"></div>
<div class="t" style="left:41px;top:369px;width:22px;text-align:center;font-size:9px;color:#3a3a3a">15</div>
<div style="left:41px;top:380px;width:22px;height:1px;background:#e9e9e9"></div>
<div class="t" style="left:41px;top:383px;width:22px;text-align:center;font-size:9px;color:#3a3a3a">16</div>
<div style="left:41px;top:394px;width:22px;height:1px;background:#e9e9e9"></div>
<div class="t" style="left:41px;top:397px;width:22px;text-align:center;font-size:9px;color:#3a3a3a">17</div>
<div style="left:41px;top:408px;width:22px;height:1px;background:#e9e9e9"></div>
<div class="t" style="left:41px;top:411px;width:22px;text-align:center;font-size:9px;color:#3a3a3a">18</div>
<div style="left:41px;top:422px;width:22px;height:1px;background:#e9e9e9"></div>
<div class="t" style="left:41px;top:425px;width:22px;text-align:center;font-size:9px;color:#3a3a3a">19</div>
<div style="left:41px;top:436px;width:22px;height:1px;background:#e9e9e9"></div>
<div class="t" style="left:41px;top:439px;width:22px;text-align:center;font-size:9px;color:#3a3a3a">20</div>
<div style="left:41px;top:450px;width:22px;height:1px;background:#e9e9e9"></div>
<div class="t" style="left:41px;top:453px;width:22px;text-align:center;font-size:9px;color:#3a3a3a">21</div>
<div style="left:41px;top:464px;width:22px;height:1px;background:#e9e9e9"></div>
<div class="t" style="left:41px;top:467px;width:22px;text-align:center;font-size:9px;color:#3a3a3a">22</div>
<div style="left:41px;top:478px;width:22px;height:1px;background:#e9e9e9"></div>
<div class="t" style="left:41px;top:481px;width:22px;text-align:center;font-size:9px;color:#3a3a3a">23</div>
<div style="left:41px;top:492px;width:22px;height:1px;background:#e9e9e9"></div>
<div class="t" style="left:41px;top:495px;width:22px;text-align:center;font-size:9px;color:#3a3a3a">24</div>
<div style="left:41px;top:506px;width:22px;height:1px;background:#e9e9e9"></div>
<div class="t" style="left:41px;top:509px;width:22px;text-align:center;font-size:9px;color:#3a3a3a">25</div>
<div style="left:41px;top:520px;width:22px;height:1px;background:#e9e9e9"></div>
<div class="t" style="left:41px;top:523px;width:22px;text-align:center;font-size:9px;color:#3a3a3a">26</div>
<div style="left:41px;top:534px;width:22px;height:1px;background:#e9e9e9"></div>
<div class="t" style="left:41px;top:537px;width:22px;text-align:center;font-size:9px;color:#3a3a3a">27</div>
<div style="left:41px;top:548px;width:22px;height:1px;background:#e9e9e9"></div>
<div class="t" style="left:41px;top:551px;width:22px;text-align:center;font-size:9px;color:#3a3a3a">28</div>
<div style="left:41px;top:562px;width:22px;height:1px;background:#e9e9e9"></div>
<div class="t" style="left:41px;top:565px;width:22px;text-align:center;font-size:9px;color:#3a3a3a">29</div>
<div style="left:41px;top:576px;width:22px;height:1px;background:#e9e9e9"></div>
<div class="t" style="left:41px;top:579px;width:22px;text-align:center;font-size:9px;color:#3a3a3a">30</div>
<div style="left:41px;top:590px;width:22px;height:1px;background:#e9e9e9"></div>
<div class="t" style="left:41px;top:593px;width:22px;text-align:center;font-size:9px;color:#3a3a3a">31</div>
<div style="left:41px;top:604px;width:22px;height:1px;background:#e9e9e9"></div>
<div class="t" style="left:41px;top:607px;width:22px;text-align:center;font-size:9px;color:#3a3a3a">32</div>
<div style="left:41px;top:618px;width:22px;height:1px;background:#e9e9e9"></div>
<div class="t" style="left:41px;top:621px;width:22px;text-align:center;font-size:9px;color:#3a3a3a">33</div>
<div style="left:41px;top:632px;width:22px;height:1px;background:#e9e9e9"></div>
<div class="t" style="left:41px;top:635px;width:22px;text-align:center;font-size:9px;color:#3a3a3a">34</div>
<div style="left:41px;top:646px;width:22px;height:1px;background:#e9e9e9"></div>
<div class="t" style="left:41px;top:649px;width:22px;text-align:center;font-size:9px;color:#3a3a3a">35</div>
<div style="left:41px;top:660px;width:22px;height:1px;background:#e9e9e9"></div>
<div class="t" style="left:41px;top:663px;width:22px;text-align:center;font-size:9px;color:#3a3a3a">36</div>
<div style="left:41px;top:674px;width:22px;height:1px;background:#e9e9e9"></div>
<div class="t" style="left:41px;top:677px;width:22px;text-align:center;font-size:9px;color:#3a3a3a">37</div>
<div style="left:41px;top:688px;width:22px;height:1px;background:#e9e9e9"></div>
<div style="left:63px;top:184px;width:1216px;height:1px;background:#d4d4d4"></div>
<div style="left:63px;top:198px;width:1216px;height:1px;background:#d4d4d4"></div>
<div style="left:63px;top:212px;width:1216px;height:1px;background:#d4d4d4"></div>
<div style="left:63px;top:226px;width:1216px;height:1px;background:#d4d4d4"></div>
<div style="left:63px;top:240px;width:1216px;height:1px;background:#d4d4d4"></div>
<div style="left:63px;top:254px;width:1216px;height:1px;background:#d4d4d4"></div>
<div style="left:63px;top:268px;width:1216px;height:1px;background:#d4d4d4"></div>
<div style="left:63px;top:282px;width:1216px;height:1px;background:#d4d4d4"></div>
<div style="left:63px;top:296px;width:1216px;height:1px;background:#d4d4d4"></div>
<div style="left:63px;top:310px;width:1216px;height:1px;background:#d4d4d4"></div>
<div style="left:63px;top:324px;width:1216px;height:1px;background:#d4d4d4"></div>
<div style="left:63px;top:338px;width:1216px;height:1px;background:#d4d4d4"></div>
<div style="left:63px;top:352px;width:1216px;height:1px;background:#d4d4d4"></div>
<div style="left:63px;top:366px;width:1216px;height:1px;background:#d4d4d4"></div>
<div style="left:63px;top:380px;width:1216px;height:1px;background:#d4d4d4"></div>
<div style="left:63px;top:394px;width:1216px;height:1px;background:#d4d4d4"></div>
<div style="left:63px;top:408px;width:1216px;height:1px;background:#d4d4d4"></div>
<div style="left:63px;top:422px;width:1216px;height:1px;background:#d4d4d4"></div>
<div style="left:63px;top:436px;width:1216px;height:1px;background:#d4d4d4"></div>
<div style="left:63px;top:450px;width:1216px;height:1px;background:#d4d4d4"></div>
<div style="left:63px;top:464px;width:1216px;height:1px;background:#d4d4d4"></div>
<div style="left:63px;top:478px;width:1216px;height:1px;background:#d4d4d4"></div>
<div style="left:63px;top:492px;width:1216px;height:1px;background:#d4d4d4"></div>
<div style="left:63px;top:506px;width:1216px;height:1px;background:#d4d4d4"></div>
<div style="left:63px;top:520px;width:1216px;height:1px;background:#d4d4d4"></div>
<div style="left:63px;top:534px;width:1216px;height:1px;background:#d4d4d4"></div>
<div style="left:63px;top:548px;width:1216px;height:1px;background:#d4d4d4"></div>
<div style="left:63px;top:562px;width:1216px;height:1px;background:#d4d4d4"></div>
<div style="left:63px;top:576px;width:1216px;height:1px;background:#d4d4d4"></div>
<div style="left:63px;top:590px;width:1216px;height:1px;background:#d4d4d4"></div>
<div style="left:63px;top:604px;width:1216px;height:1px;background:#d4d4d4"></div>
<div style="left:63px;top:618px;width:1216px;height:1px;background:#d4d4d4"></div>
<div style="left:63px;top:632px;width:1216px;height:1px;background:#d4d4d4"></div>
<div style="left:63px;top:646px;width:1216px;height:1px;background:#d4d4d4"></div>
<div style="left:63px;top:660px;width:1216px;height:1px;background:#d4d4d4"></div>
<div style="left:63px;top:674px;width:1216px;height:1px;background:#d4d4d4"></div>
<div style="left:77px;top:184px;width:1px;height:493px;background:#d4d4d4"></div>
<div style="left:91px;top:212px;width:1px;height:29px;background:#d4d4d4"></div>
<div style="left:91px;top:254px;width:1px;height:113px;background:#d4d4d4"></div>
<div style="left:91px;top:380px;width:1px;height:113px;background:#d4d4d4"></div>
<div style="left:91px;top:506px;width:1px;height:127px;background:#d4d4d4"></div>
<div style="left:91px;top:646px;width:1px;height:31px;background:#d4d4d4"></div>
<div style="left:108px;top:212px;width:1px;height:29px;background:#d4d4d4"></div>
<div style="left:108px;top:254px;width:1px;height:113px;background:#d4d4d4"></div>
<div style="left:108px;top:380px;width:1px;height:113px;background:#d4d4d4"></div>
<div style="left:108px;top:506px;width:1px;height:127px;background:#d4d4d4"></div>
<div style="left:108px;top:674px;width:1px;height:3px;background:#d4d4d4"></div>
<div style="left:345px;top:170px;width:1px;height:507px;background:#d4d4d4"></div>
<div style="left:432px;top:170px;width:1px;height:507px;background:#d4d4d4"></div>
<div style="left:508px;top:170px;width:1px;height:507px;background:#d4d4d4"></div>
<div style="left:584px;top:170px;width:1px;height:507px;background:#d4d4d4"></div>
<div style="left:660px;top:170px;width:1px;height:507px;background:#d4d4d4"></div>
<div style="left:736px;top:170px;width:1px;height:507px;background:#d4d4d4"></div>
<div style="left:812px;top:170px;width:1px;height:507px;background:#d4d4d4"></div>
<div style="left:888px;top:170px;width:1px;height:507px;background:#d4d4d4"></div>
<div style="left:964px;top:170px;width:1px;height:507px;background:#d4d4d4"></div>
<div style="left:1040px;top:170px;width:1px;height:507px;background:#d4d4d4"></div>
<div style="left:1116px;top:170px;width:1px;height:507px;background:#d4d4d4"></div>
<div style="left:1192px;top:170px;width:1px;height:507px;background:#d4d4d4"></div>
<div style="left:1268px;top:170px;width:1px;height:507px;background:#d4d4d4"></div>
<div style="left:1344px;top:170px;width:1px;height:507px;background:#d4d4d4"></div>
<div class="c" style="left:66px;top:170.5px;color:#000;font-weight:bold;transform:scaleX(0.945);transform-origin:0 0;">Project by Project Model</div>
<div class="c" style="left:80px;top:184.5px;color:#000;transform:scaleX(0.945);transform-origin:0 0;">Project Code</div>
<div class="c" style="left:345px;top:184.5px;width:85px;text-align:right;color:#2b2590;transform:scaleX(0.945);transform-origin:100% 0;">3</div>
<div class="c" style="left:80px;top:198.5px;color:#000;transform:scaleX(0.945);transform-origin:0 0;">Project Name</div>
<div class="c" style="left:348px;top:198.5px;color:#000;transform:scaleX(0.945);transform-origin:0 0;">Residential 1</div>
<div class="c" style="left:80px;top:240.5px;color:#000;transform:scaleX(0.945);transform-origin:0 0;">Capital Expenditure Inputs</div>
<div class="c" style="left:91px;top:254.5px;width:15px;text-align:right;color:#000;transform:scaleX(0.945);transform-origin:100% 0;">2</div>
<div class="c" style="left:111px;top:254.5px;color:#000;transform:scaleX(0.945);transform-origin:0 0;">Construction Start Date</div>
<div class="c" style="left:345px;top:254.5px;width:85px;text-align:right;color:#000;transform:scaleX(0.945);transform-origin:100% 0;">01-Oct-16</div>
<div class="c" style="left:91px;top:268.5px;width:15px;text-align:right;color:#000;transform:scaleX(0.945);transform-origin:100% 0;">4</div>
<div class="c" style="left:111px;top:268.5px;color:#000;transform:scaleX(0.945);transform-origin:0 0;">TOP Date</div>
<div class="c" style="left:345px;top:268.5px;width:85px;text-align:right;color:#000;transform:scaleX(0.945);transform-origin:100% 0;">01-May-18</div>
<div class="c" style="left:91px;top:282.5px;width:15px;text-align:right;color:#000;transform:scaleX(0.945);transform-origin:100% 0;">5</div>
<div class="c" style="left:111px;top:282.5px;color:#000;transform:scaleX(0.945);transform-origin:0 0;">Gross Floor Area</div>
<div class="c" style="left:345px;top:282.5px;width:82px;text-align:right;color:#000;transform:scaleX(0.945);transform-origin:100% 0;">1,000.00</div>
<div class="c" style="left:91px;top:296.5px;width:15px;text-align:right;color:#000;transform:scaleX(0.945);transform-origin:100% 0;">8</div>
<div class="c" style="left:111px;top:296.5px;color:#000;transform:scaleX(0.945);transform-origin:0 0;">Construction Cost $S/Gross Area</div>
<div class="c" style="left:345px;top:296.5px;width:82px;text-align:right;color:#000;transform:scaleX(0.945);transform-origin:100% 0;">50.00</div>
<div class="c" style="left:91px;top:310.5px;width:15px;text-align:right;color:#000;transform:scaleX(0.945);transform-origin:100% 0;">7</div>
<div class="c" style="left:111px;top:310.5px;color:#000;transform:scaleX(0.945);transform-origin:0 0;">Number of Units</div>
<div class="c" style="left:345px;top:310.5px;width:82px;text-align:right;color:#000;transform:scaleX(0.945);transform-origin:100% 0;">250.00</div>
<div class="c" style="left:91px;top:324.5px;width:15px;text-align:right;color:#2b2590;transform:scaleX(0.945);transform-origin:100% 0;">10</div>
<div class="c" style="left:111px;top:324.5px;color:#000;transform:scaleX(0.945);transform-origin:0 0;">S-Curve Code</div>
<div class="c" style="left:345px;top:324.5px;width:82px;text-align:right;color:#000;transform:scaleX(0.945);transform-origin:100% 0;">10.00</div>
<div class="c" style="left:91px;top:338.5px;width:15px;text-align:right;color:#2b2590;transform:scaleX(0.945);transform-origin:100% 0;">9</div>
<div class="c" style="left:111px;top:338.5px;color:#000;transform:scaleX(0.945);transform-origin:0 0;">Sensitivity</div>
<div class="c" style="left:345px;top:338.5px;width:85px;text-align:right;color:#000;transform:scaleX(0.945);transform-origin:100% 0;">90%</div>
<div class="c" style="left:91px;top:380.5px;width:15px;text-align:right;color:#000;transform:scaleX(0.945);transform-origin:100% 0;">19</div>
<div class="c" style="left:111px;top:380.5px;color:#000;transform:scaleX(0.945);transform-origin:0 0;">Rental Rate S$/NFA per Month</div>
<div class="c" style="left:345px;top:380.5px;width:82px;text-align:right;color:#000;transform:scaleX(0.945);transform-origin:100% 0;">0.00</div>
<div class="c" style="left:91px;top:394.5px;width:15px;text-align:right;color:#000;transform:scaleX(0.945);transform-origin:100% 0;">20</div>
<div class="c" style="left:111px;top:394.5px;color:#000;transform:scaleX(0.945);transform-origin:0 0;">Service Charge S$/NFA/Mnth</div>
<div class="c" style="left:345px;top:394.5px;width:82px;text-align:right;color:#000;transform:scaleX(0.945);transform-origin:100% 0;">0.00</div>
<div class="c" style="left:91px;top:408.5px;width:15px;text-align:right;color:#000;transform:scaleX(0.945);transform-origin:100% 0;">21</div>
<div class="c" style="left:111px;top:408.5px;color:#000;transform:scaleX(0.945);transform-origin:0 0;">Occupancy Code Number</div>
<div class="c" style="left:345px;top:408.5px;width:82px;text-align:right;color:#000;transform:scaleX(0.945);transform-origin:100% 0;">0.00</div>
<div class="c" style="left:91px;top:422.5px;width:15px;text-align:right;color:#000;transform:scaleX(0.945);transform-origin:100% 0;">22</div>
<div class="c" style="left:111px;top:422.5px;color:#000;transform:scaleX(0.945);transform-origin:0 0;">Operating Costs</div>
<div class="c" style="left:345px;top:422.5px;width:82px;text-align:right;color:#000;transform:scaleX(0.945);transform-origin:100% 0;">0.00</div>
<div class="c" style="left:91px;top:436.5px;width:15px;text-align:right;color:#000;transform:scaleX(0.945);transform-origin:100% 0;">23</div>
<div class="c" style="left:111px;top:436.5px;color:#000;transform:scaleX(0.945);transform-origin:0 0;">Rental Growth Code</div>
<div class="c" style="left:345px;top:436.5px;width:82px;text-align:right;color:#000;transform:scaleX(0.945);transform-origin:100% 0;">0.00</div>
<div class="c" style="left:91px;top:450.5px;width:15px;text-align:right;color:#000;transform:scaleX(0.945);transform-origin:100% 0;">24</div>
<div class="c" style="left:111px;top:450.5px;color:#000;transform:scaleX(0.945);transform-origin:0 0;">Holding (Years) Period</div>
<div class="c" style="left:345px;top:450.5px;width:82px;text-align:right;color:#000;transform:scaleX(0.945);transform-origin:100% 0;">0.00</div>
<div class="c" style="left:91px;top:464.5px;width:15px;text-align:right;color:#000;transform:scaleX(0.945);transform-origin:100% 0;">25</div>
<div class="c" style="left:111px;top:464.5px;color:#000;transform:scaleX(0.945);transform-origin:0 0;">Cap Rate</div>
<div class="c" style="left:345px;top:464.5px;width:85px;text-align:right;color:#000;transform:scaleX(0.945);transform-origin:100% 0;">4%</div>
<div class="c" style="left:91px;top:506.5px;width:15px;text-align:right;color:#2b2590;transform:scaleX(0.945);transform-origin:100% 0;">12</div>
<div class="c" style="left:111px;top:506.5px;color:#000;transform:scaleX(0.945);transform-origin:0 0;">Rental/Sales Sensitivity</div>
<div class="c" style="left:345px;top:506.5px;width:85px;text-align:right;color:#000;transform:scaleX(0.945);transform-origin:100% 0;">100%</div>
<div class="c" style="left:91px;top:520.5px;width:15px;text-align:right;color:#2b2590;transform:scaleX(0.945);transform-origin:100% 0;">13</div>
<div class="c" style="left:111px;top:520.5px;color:#000;transform:scaleX(0.945);transform-origin:0 0;">Selling Price / NLA</div>
<div class="c" style="left:345px;top:520.5px;width:82px;text-align:right;color:#000;transform:scaleX(0.945);transform-origin:100% 0;">59.00</div>
<div class="c" style="left:91px;top:534.5px;width:15px;text-align:right;color:#2b2590;transform:scaleX(0.945);transform-origin:100% 0;">14</div>
<div class="c" style="left:111px;top:534.5px;color:#000;transform:scaleX(0.945);transform-origin:0 0;">Margin on Sales</div>
<div class="c" style="left:345px;top:534.5px;width:85px;text-align:right;color:#000;transform:scaleX(0.945);transform-origin:100% 0;">12%</div>
<div class="c" style="left:91px;top:548.5px;width:15px;text-align:right;color:#2b2590;transform:scaleX(0.945);transform-origin:100% 0;">15</div>
<div class="c" style="left:111px;top:548.5px;color:#000;transform:scaleX(0.945);transform-origin:0 0;">Progress Payments Code</div>
<div class="c" style="left:345px;top:548.5px;width:82px;text-align:right;color:#000;transform:scaleX(0.945);transform-origin:100% 0;">1.00</div>
<div class="c" style="left:91px;top:562.5px;width:15px;text-align:right;color:#2b2590;transform:scaleX(0.945);transform-origin:100% 0;">16</div>
<div class="c" style="left:111px;top:562.5px;color:#000;transform:scaleX(0.945);transform-origin:0 0;">Progress Payment Name</div>
<div class="c" style="left:91px;top:576.5px;width:15px;text-align:right;color:#2b2590;transform:scaleX(0.945);transform-origin:100% 0;">17</div>
<div class="c" style="left:111px;top:576.5px;color:#000;transform:scaleX(0.945);transform-origin:0 0;">Sales Rate Scenario</div>
<div class="c" style="left:345px;top:576.5px;width:82px;text-align:right;color:#000;transform:scaleX(0.945);transform-origin:100% 0;">1.00</div>
<div class="c" style="left:91px;top:590.5px;width:15px;text-align:right;color:#2b2590;transform:scaleX(0.945);transform-origin:100% 0;">18</div>
<div class="c" style="left:111px;top:590.5px;color:#000;transform:scaleX(0.945);transform-origin:0 0;">Sale Rate Name</div>
<div class="c" style="left:348px;top:562.5px;color:#000;transform:scaleX(0.945);transform-origin:0 0;">Base</div>
<div class="c" style="left:348px;top:590.5px;color:#000;transform:scaleX(0.945);transform-origin:0 0;">Base</div>
<div class="c" style="left:80px;top:366.5px;color:#000;transform:scaleX(0.945);transform-origin:0 0;">Commercial Revenue and Sales Inputs</div>
<div class="c" style="left:80px;top:492.5px;color:#000;transform:scaleX(0.945);transform-origin:0 0;">Residential Revenue Inputs</div>
<div class="c" style="left:80px;top:632.5px;color:#000;transform:scaleX(0.945);transform-origin:0 0;">Construction Expenditures</div>
<div class="c" style="left:348px;top:632.5px;color:#000;transform:scaleX(0.945);transform-origin:0 0;">Construct start</div>
<div class="c" style="left:435px;top:632.5px;color:#000;transform:scaleX(0.945);transform-origin:0 0;">TOP</div>
<div class="c" style="left:94px;top:646.5px;color:#000;transform:scaleX(0.945);transform-origin:0 0;">Construction Start Switch</div>
<div class="c" style="left:345px;top:646.5px;width:85px;text-align:right;color:#000;transform:scaleX(0.945);transform-origin:100% 0;">01-Oct-16</div>
<div class="c" style="left:432px;top:646.5px;width:74px;text-align:right;color:#000;transform:scaleX(0.945);transform-origin:100% 0;">01-May-18</div>
<div class="c" style="left:94px;top:660.5px;color:#000;transform:scaleX(0.945);transform-origin:0 0;">Construction Period</div>
<div style="left:660px;top:646px;width:619px;height:15px;background:#ffc7ce"></div>
<div class="c" style="left:660px;top:646.5px;width:76px;text-align:center;color:#9c0006;transform:scaleX(0.84);left:661px;">FALSE</div>
<div class="c" style="left:660px;top:660.5px;width:74px;text-align:right;color:#000;transform:scaleX(0.945);transform-origin:100% 0;">0</div>
<div class="c" style="left:736px;top:646.5px;width:76px;text-align:center;color:#9c0006;transform:scaleX(0.84);left:737px;">FALSE</div>
<div class="c" style="left:736px;top:660.5px;width:74px;text-align:right;color:#000;transform:scaleX(0.945);transform-origin:100% 0;">0</div>
<div class="c" style="left:812px;top:646.5px;width:76px;text-align:center;color:#9c0006;transform:scaleX(0.84);left:813px;">FALSE</div>
<div class="c" style="left:812px;top:660.5px;width:74px;text-align:right;color:#000;transform:scaleX(0.945);transform-origin:100% 0;">0</div>
<div class="c" style="left:888px;top:646.5px;width:76px;text-align:center;color:#9c0006;transform:scaleX(0.84);left:889px;">FALSE</div>
<div class="c" style="left:888px;top:660.5px;width:74px;text-align:right;color:#000;transform:scaleX(0.945);transform-origin:100% 0;">0</div>
<div class="c" style="left:964px;top:646.5px;width:76px;text-align:center;color:#9c0006;transform:scaleX(0.84);left:965px;">FALSE</div>
<div class="c" style="left:964px;top:660.5px;width:74px;text-align:right;color:#000;transform:scaleX(0.945);transform-origin:100% 0;">0</div>
<div class="c" style="left:1040px;top:646.5px;width:76px;text-align:center;color:#9c0006;transform:scaleX(0.84);left:1041px;">FALSE</div>
<div class="c" style="left:1040px;top:660.5px;width:74px;text-align:right;color:#000;transform:scaleX(0.945);transform-origin:100% 0;">0</div>
<div class="c" style="left:1116px;top:646.5px;width:76px;text-align:center;color:#9c0006;transform:scaleX(0.84);left:1117px;">FALSE</div>
<div class="c" style="left:1116px;top:660.5px;width:74px;text-align:right;color:#000;transform:scaleX(0.945);transform-origin:100% 0;">0</div>
<div class="c" style="left:1192px;top:646.5px;width:76px;text-align:center;color:#9c0006;transform:scaleX(0.84);left:1193px;">FALSE</div>
<div class="c" style="left:1192px;top:660.5px;width:74px;text-align:right;color:#000;transform:scaleX(0.945);transform-origin:100% 0;">0</div>
<div class="c" style="left:1268px;top:646.5px;width:76px;text-align:center;color:#9c0006;transform:scaleX(0.84);left:1269px;">FALSE</div>
<div class="c" style="left:1268px;top:660.5px;width:74px;text-align:right;color:#000;transform:scaleX(0.945);transform-origin:100% 0;">0</div>
<div style="left:76px;top:183px;width:357px;height:16px;border:2px solid #000"></div>
<div style="left:0;top:677px;width:1279px;height:26px;background:linear-gradient(#f5f5f5,#ececec)"></div>
<div style="left:0px;top:677px;width:1279px;height:1px;background:#d0d0d0"></div>
<div style="left:0px;top:703px;width:1279px;height:1px;background:#bdbdbd"></div>
<svg style="position:absolute;left:14.5px;top:684px;" width="8" height="11" viewBox="0 0 8 11"><path d="M7.5 0.5v10L0.5 5.5z" fill="#8a8a8a"/></svg>
<svg style="position:absolute;left:37px;top:684px;" width="8" height="11" viewBox="0 0 8 11"><path d="M0.5 0.5v10l7-5z" fill="#555"/></svg>
<div style="left:60px;top:678px;width:1px;height:20px;background:#d5d5d5"></div>
<div style="left:134px;top:678px;width:1px;height:20px;background:#d5d5d5"></div>
<div style="left:272px;top:678px;width:1px;height:20px;background:#d5d5d5"></div>
<div style="left:407px;top:678px;width:1px;height:20px;background:#d5d5d5"></div>
<div style="left:527px;top:678px;width:1px;height:20px;background:#d5d5d5"></div>
<div style="left:664px;top:678px;width:1px;height:20px;background:#d5d5d5"></div>
<div style="left:788px;top:678px;width:1px;height:20px;background:#d5d5d5"></div>
<div style="left:1172px;top:678px;width:1px;height:20px;background:#d5d5d5"></div>
<div style="left:1211px;top:678px;width:1px;height:20px;background:#d5d5d5"></div>
<div style="left:1249px;top:678px;width:1px;height:20px;background:#d5d5d5"></div>
<div style="left:273px;top:677px;width:134px;height:3.5px;background:#e8737c;border-radius:1px"></div>
<div style="left:872px;top:677px;width:175px;height:22px;background:#fff;border-radius:0 0 4px 4px;box-shadow:0 1px 1.5px rgba(0,0,0,0.35)"></div>
<div class="t" style="left:72px;top:684px;font-size:12.5px;color:#5a5a5a">Contents</div>
<div class="t" style="left:146.5px;top:684px;font-size:12.3px;color:#5a5a5a">Mixed Use Summary</div>
<div class="t" style="left:284.4px;top:684px;font-size:12.3px;color:#5a5a5a">Mixed Use Scenario</div>
<div class="t" style="left:419.8px;top:684px;font-size:12.3px;color:#5a5a5a">Mixed Use Model</div>
<div class="t" style="left:539.6px;top:684px;font-size:12.3px;color:#5a5a5a">Mixed Use Quarterly</div>
<div class="t" style="left:676.3px;top:684px;font-size:12.3px;color:#5a5a5a">Mixed Use Annual</div>
<div class="t" style="left:800.3px;top:684px;font-size:12.3px;color:#5a5a5a">Sales Rate</div>
<div class="t" style="left:1058.2px;top:684px;font-size:12.3px;color:#5a5a5a">Cap Rate Exercise</div>
<div class="t" style="left:883.4px;top:684px;font-size:12.8px;color:#1f7a4a;font-weight:bold;letter-spacing:-0.3px">Mixed Use with Data Table</div>
<div class="t" style="left:1183px;top:684px;font-size:12.3px;color:#bbb">Fun</div>
<div style="left:1226px;top:688.6px;width:10px;height:2.2px;background:#555"></div>
<div style="left:1229.9px;top:684.7px;width:2.2px;height:10px;background:#555"></div>
<div style="left:0;top:704px;width:1279px;height:22px;background:linear-gradient(#e9e9e9,#d4d4d4)"></div>
<div style="left:0px;top:725px;width:1279px;height:2px;background:#2a2a2a"></div>
<div class="t" style="left:24.5px;top:709px;font-size:12.3px;color:#555">Ready</div>
<div style="left:995px;top:704px;width:37px;height:21px;background:linear-gradient(#c9c9c9,#bdbdbd)"></div>
<svg style="position:absolute;left:1006px;top:707px;" width="14" height="14" viewBox="0 0 14 14"><g stroke="#fff" stroke-width="1"><rect x="0.5" y="0.5" width="13" height="13" fill="none"/><path d="M0.5 4.8h13M0.5 9.2h13M4.8 0.5v13M9.2 0.5v13"/></g></svg>
<svg style="position:absolute;left:1042px;top:707px;" width="14" height="14" viewBox="0 0 14 14"><rect x="0.5" y="0.5" width="13" height="13" fill="none" stroke="#5a5a5a"/><rect x="3" y="2.5" width="8" height="9" fill="none" stroke="#5a5a5a" stroke-width="0.9"/><path d="M4.5 5h5M4.5 7h5M4.5 9h5" stroke="#5a5a5a" stroke-width="0.8"/></svg>
<div style="left:1075px;top:714px;width:8px;height:1.6px;background:#555"></div>
<div style="left:1090px;top:713px;width:100px;height:3px;background:#9a9a9a;border-radius:2px"></div>
<div style="left:1128px;top:707px;width:14px;height:14px;border-radius:50%;background:linear-gradient(#fff,#e8e8e8);box-shadow:0 0.5px 1.5px rgba(0,0,0,0.5)"></div>
<div style="left:1196px;top:714px;width:9px;height:1.6px;background:#555"></div>
<div style="left:1199.7px;top:710.3px;width:1.6px;height:9px;background:#555"></div>
<div class="t" style="left:1225px;top:709px;font-size:12.3px;color:#555">90%</div>
</body></html>
